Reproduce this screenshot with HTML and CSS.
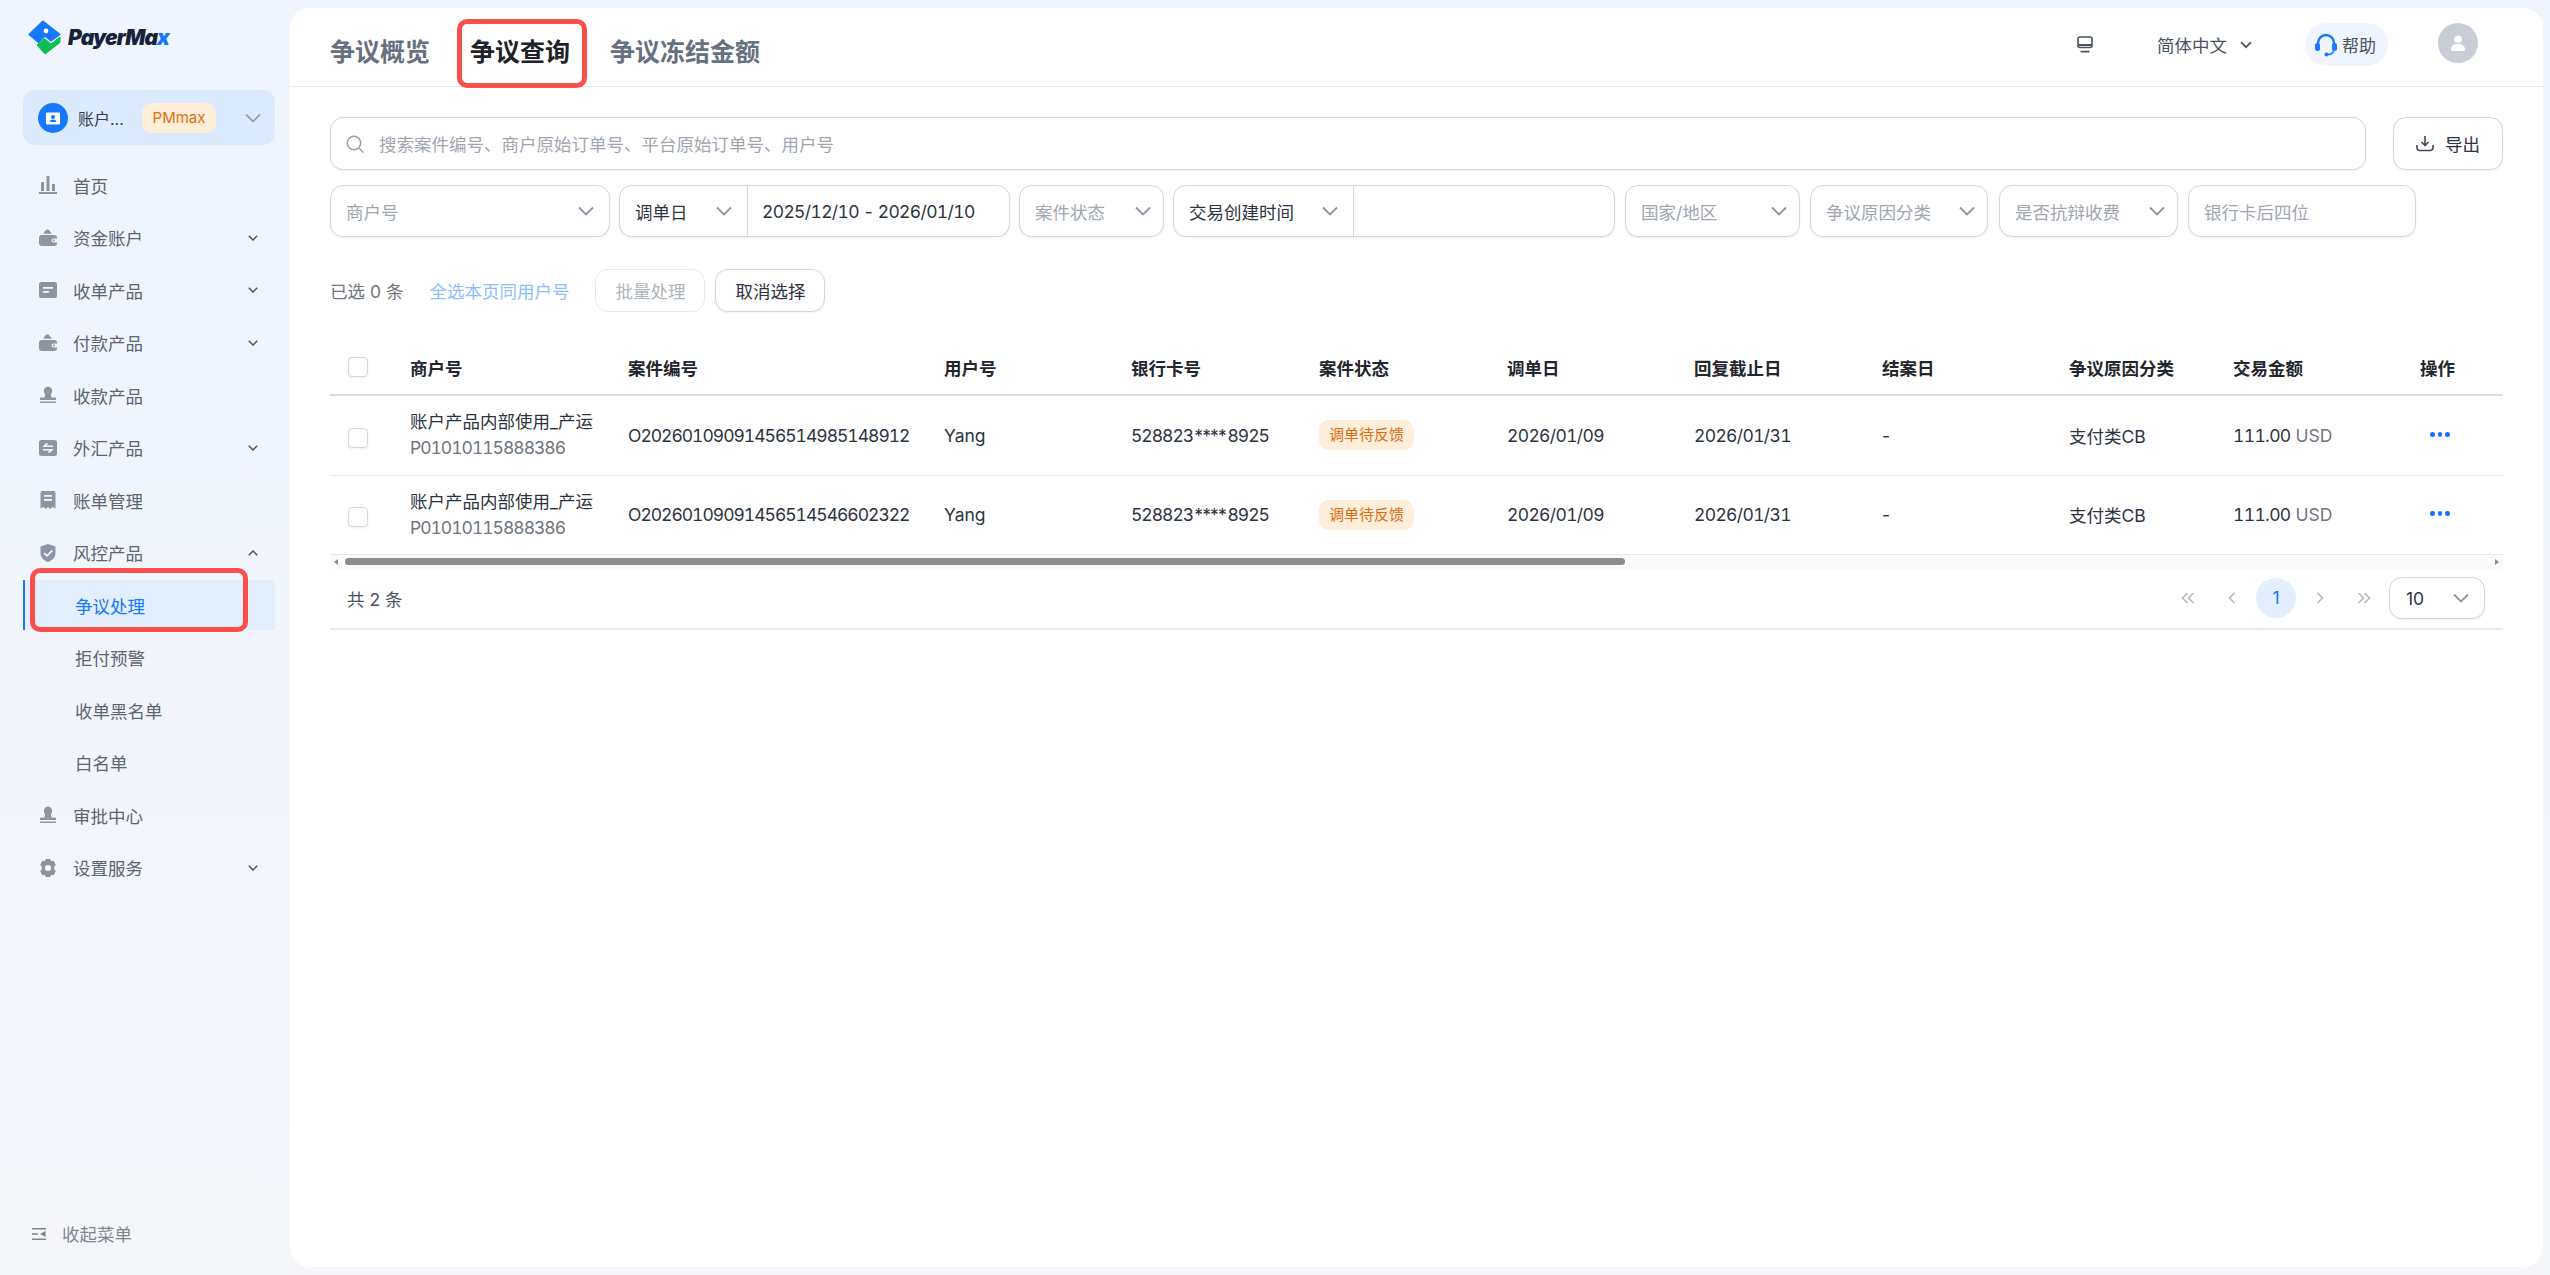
FILE: index.html
```html
<!DOCTYPE html>
<html lang="zh-CN">
<head>
    <meta charset="UTF-8">
    <title>争议查询</title>
    <link rel="stylesheet" href="styles.css">
</head>
<body>
    <aside class="sidebar">
        <div class="logo">
            <svg class="logo-mark" viewBox="0 0 33 35">
                <path d="M15 1.5 31.5 14.5 23 20.5 17 15.5 10.5 22 1.5 14.5Z" fill="#1677ff" stroke="#1677ff" stroke-width="2" stroke-linejoin="round"/>
                <circle cx="18" cy="11" r="2.4" fill="#fff"/>
                <path d="M9 25 16.5 18.5 23 24 32 17V22.5L17 34Z" fill="#0cbf52" stroke="#0cbf52" stroke-width="1" stroke-linejoin="round"/>
            </svg>
            <span class="logo-text">Payer<span class="logo-ma">Ma</span><span class="logo-x">x</span></span>
        </div>

        <div class="account">
            <span class="account-icon">
                <svg viewBox="0 0 16 16" width="16" height="16"><path d="M2 2.5h12a1 1 0 0 1 1 1v10a1 1 0 0 1-1 1H2a1 1 0 0 1-1-1v-10a1 1 0 0 1 1-1Z" fill="#fff"/><circle cx="8" cy="7" r="2" fill="#1677ff"/><path d="M4.5 12c.5-2 2-2.6 3.500-2.600s3 .6 3.500 2.600Z" fill="#1677ff"/></svg>
            </span>
            <span class="account-name">账户...</span>
            <span class="account-badge">PMmax</span>
            <svg class="account-arrow" viewBox="0 0 16 10" width="16" height="10"><path d="M1 1.500 8 8.500 15 1.500" fill="none" stroke="#9aa1ad" stroke-width="1.800"/></svg>
        </div>

        <nav class="nav">
            <a class="nav-item">
                <svg class="nav-icon" viewBox="0 0 18 18"><path d="M7.500 0h3v15h-3ZM2 6h3v9H2ZM13 8h3v7h-3ZM0 16h18v2H0Z"/></svg>
                <span>首页</span>
            </a>
            <a class="nav-item">
                <svg class="nav-icon" viewBox="0 0 18 18"><path fill-rule="evenodd" d="M4.500 4.800C5 2.500 7 .5 8.500.5c1 0 1.500.5 2 1.200L13 4.800ZM3 6h12a3 3 0 0 1 3 3v.5h-3.500a2 2 0 0 0 0 4H18v.5a3 3 0 0 1-3 3H3a3 3 0 0 1-3-3V9a3 3 0 0 1 3-3Z"/><circle cx="14.800" cy="11.500" r="1"/></svg>
                <span>资金账户</span>
                <svg class="nav-arrow" viewBox="0 0 10 6"><path d="M.8.800 5 5 9.200.800"/></svg>
            </a>
            <a class="nav-item">
                <svg class="nav-icon" viewBox="0 0 18 18"><path fill-rule="evenodd" d="M2.500 1h13A2.500 2.500 0 0 1 18 3.500v11a2.500 2.500 0 0 1-2.500 2.500h-13A2.500 2.500 0 0 1 0 14.500v-11A2.500 2.500 0 0 1 2.500 1ZM4 6v1.800h10V6ZM4 10v1.800h6V10Z"/></svg>
                <span>收单产品</span>
                <svg class="nav-arrow" viewBox="0 0 10 6"><path d="M.8.800 5 5 9.200.800"/></svg>
            </a>
            <a class="nav-item">
                <svg class="nav-icon" viewBox="0 0 18 18"><path fill-rule="evenodd" d="M4.500 4.800C5 2.500 7 .5 8.500.5c1 0 1.500.5 2 1.200L13 4.800ZM3 6h12a3 3 0 0 1 3 3v.5h-3.500a2 2 0 0 0 0 4H18v.5a3 3 0 0 1-3 3H3a3 3 0 0 1-3-3V9a3 3 0 0 1 3-3Z"/><circle cx="14.800" cy="11.500" r="1"/></svg>
                <span>付款产品</span>
                <svg class="nav-arrow" viewBox="0 0 10 6"><path d="M.8.800 5 5 9.200.800"/></svg>
            </a>
            <a class="nav-item">
                <svg class="nav-icon" viewBox="0 0 18 18"><circle cx="9" cy="5" r="4.200"/><path d="M6.500 8h5l1 3.500h3.500a1 1 0 0 1 1 1V14H1v-1.500a1 1 0 0 1 1-1h3.500ZM1 15.500h16V17H1Z"/></svg>
                <span>收款产品</span>
            </a>
            <a class="nav-item">
                <svg class="nav-icon" viewBox="0 0 18 18"><path fill-rule="evenodd" d="M2.500 1h13A2.500 2.500 0 0 1 18 3.500v11a2.500 2.500 0 0 1-2.500 2.500h-13A2.500 2.500 0 0 1 0 14.500v-11A2.500 2.500 0 0 1 2.500 1ZM8 3.800 4 6.900v1h10V6.500H7.500L9 5ZM10 14.200l4-3.100v-1H4v1.400h6.500L9 13Z"/></svg>
                <span>外汇产品</span>
                <svg class="nav-arrow" viewBox="0 0 10 6"><path d="M.8.800 5 5 9.200.800"/></svg>
            </a>
            <a class="nav-item">
                <svg class="nav-icon" viewBox="0 0 18 18"><path fill-rule="evenodd" d="M3.500 0h11A2 2 0 0 1 16.500 2v15.500L13.500 16 11 18 9 16 7 18 4.500 16 1.500 17.500V2a2 2 0 0 1 2-2ZM5 4v1.800h8V4ZM5 8v1.800h8V8Z"/></svg>
                <span>账单管理</span>
            </a>
            <a class="nav-item">
                <svg class="nav-icon" viewBox="0 0 18 18"><path fill-rule="evenodd" d="M9 0 16.500 2.500V9c0 4.500-3.500 7.800-7.500 9-4-1.200-7.500-4.500-7.500-9V2.500ZM5.500 8.500 4.400 9.700 8 13l6-6-1.200-1.200L8 10.600Z"/></svg>
                <span>风控产品</span>
                <svg class="nav-arrow" viewBox="0 0 10 6"><path d="M.8 5.200 5 1l4.200 4.200"/></svg>
            </a>
            <a class="nav-sub nav-sub-active">争议处理</a>
            <a class="nav-sub">拒付预警</a>
            <a class="nav-sub">收单黑名单</a>
            <a class="nav-sub">白名单</a>
            <a class="nav-item">
                <svg class="nav-icon" viewBox="0 0 18 18"><circle cx="9" cy="5" r="4.200"/><path d="M6.500 8h5l1 3.500h3.500a1 1 0 0 1 1 1V14H1v-1.500a1 1 0 0 1 1-1h3.500ZM1 15.500h16V17H1Z"/></svg>
                <span>审批中心</span>
            </a>
            <a class="nav-item">
                <svg class="nav-icon" viewBox="0 0 18 18"><path fill-rule="evenodd" d="M6.500 0h5l.6 2.300 2.300-.7 2.500 4.300-1.700 1.700v2.800l1.700 1.700-2.500 4.300-2.300-.7-.6 2.300h-5l-.6-2.300-2.300.7L1.100 12.100l1.700-1.700V7.600L1.100 5.900l2.500-4.300 2.300.7ZM9 6a3 3 0 1 0 0 6 3 3 0 0 0 0-6Z"/></svg>
                <span>设置服务</span>
                <svg class="nav-arrow" viewBox="0 0 10 6"><path d="M.8.800 5 5 9.200.800"/></svg>
            </a>
        </nav>

        <div class="collapse">
            <svg viewBox="0 0 14 12" width="14" height="12"><path d="M0 0h14v1.600H0ZM0 5.200h6v1.600H0ZM0 10.400h14V12H0ZM13.500 3v6L8 6Z" fill="#7d8590"/></svg>
            <span>收起菜单</span>
        </div>
    </aside>

    <main class="panel">
        <header class="topbar">
            <div class="tabs">
                <a class="tab">争议概览</a>
                <a class="tab tab-active">争议查询</a>
                <a class="tab">争议冻结金额</a>
            </div>
            <div class="top-actions">
                <svg class="top-monitor" viewBox="0 0 16 17" width="16" height="17"><rect x="1" y="1" width="14" height="10.500" rx="2" fill="none" stroke="#4b5361" stroke-width="1.600"/><path d="M1 8h14v2H1ZM3.500 14.800h9v1.600h-9Z" fill="#4b5361"/></svg>
                <span class="top-lang">简体中文</span>
                <svg class="top-lang-arrow" viewBox="0 0 12 8" width="12" height="8"><path d="M1 1.200 6 6.200l5-5" fill="none" stroke="#4b5361" stroke-width="1.800"/></svg>
                <span class="help">
                    <svg viewBox="0 0 22 24" width="22" height="24"><path d="M3 12V10a8 8 0 0 1 16 0v2" fill="none" stroke="#1677ff" stroke-width="2.400"/><rect x="0" y="10" width="5" height="8" rx="2.500" fill="#1677ff"/><rect x="17" y="10" width="5" height="8" rx="2.500" fill="#1677ff"/><path d="M18.500 18c-.5 2.500-3 3.500-6 3.500" fill="none" stroke="#1677ff" stroke-width="1.600"/><circle cx="11.500" cy="21.500" r="2" fill="#1677ff"/></svg>
                    <span>帮助</span>
                </span>
                <span class="avatar">
                    <svg viewBox="0 0 16 16" width="16" height="16"><circle cx="8" cy="4.200" r="3.800" fill="#fff"/><path d="M1 15c0-4 2.500-6 7-6s7 2 7 6c0 .6-.4 1-1 1H2c-.6 0-1-.4-1-1Z" fill="#fff"/></svg>
                </span>
            </div>
        </header>

        <section class="content">
            <div class="search-row">
                <div class="box search">
                    <svg viewBox="0 0 18 18" width="18" height="18"><circle cx="8" cy="8" r="6.700" fill="none" stroke="#99a0ab" stroke-width="1.500"/><path d="m13 13 4.500 4.500" stroke="#99a0ab" stroke-width="1.500"/></svg>
                    <span class="ph">搜索案件编号、商户原始订单号、平台原始订单号、用户号</span>
                </div>
                <button class="box export">
                    <svg viewBox="0 0 18 16" width="18" height="16"><path d="M9 0v9M5.500 6 9 9.500 12.500 6" fill="none" stroke="#414a58" stroke-width="1.600"/><path d="M1 9v2.500a3 3 0 0 0 3 3h10a3 3 0 0 0 3-3V9" fill="none" stroke="#414a58" stroke-width="1.600"/></svg>
                    <span>导出</span>
                </button>
            </div>

            <div class="filters">
                <div class="box field f-merchant"><span class="ph">商户号</span><svg class="caret" viewBox="0 0 16 10"><path d="M1 1.500 8 8.500l7-7"/></svg></div>
                <div class="box combo f-date">
                    <div class="combo-left cl-date"><span>调单日</span><svg class="caret" viewBox="0 0 16 10"><path d="M1 1.500 8 8.500l7-7"/></svg></div>
                    <span class="combo-val date">2025/12/10 - 2026/01/10</span>
                </div>
                <div class="box field f-status"><span class="ph">案件状态</span><svg class="caret" viewBox="0 0 16 10"><path d="M1 1.500 8 8.500l7-7"/></svg></div>
                <div class="box combo f-created">
                    <div class="combo-left cl-created"><span>交易创建时间</span><svg class="caret" viewBox="0 0 16 10"><path d="M1 1.500 8 8.500l7-7"/></svg></div>
                </div>
                <div class="box field f-country"><span class="ph">国家/地区</span><svg class="caret" viewBox="0 0 16 10"><path d="M1 1.500 8 8.500l7-7"/></svg></div>
                <div class="box field f-reason"><span class="ph">争议原因分类</span><svg class="caret" viewBox="0 0 16 10"><path d="M1 1.500 8 8.500l7-7"/></svg></div>
                <div class="box field f-fee"><span class="ph">是否抗辩收费</span><svg class="caret" viewBox="0 0 16 10"><path d="M1 1.500 8 8.500l7-7"/></svg></div>
                <div class="box field f-card"><span class="ph">银行卡后四位</span></div>
            </div>

            <div class="toolbar">
                <span class="selected">已选 0 条</span>
                <a class="select-all">全选本页同用户号</a>
                <button class="box tool-btn tool-disabled">批量处理</button>
                <button class="box tool-btn">取消选择</button>
            </div>

            <table class="grid">
                <colgroup>
                    <col class="c1"><col class="c2"><col class="c3"><col class="c4"><col class="c5"><col class="c6">
                    <col class="c7"><col class="c8"><col class="c9"><col class="c10"><col class="c11"><col class="c12">
                </colgroup>
                <thead>
                    <tr>
                        <th><span class="check"></span></th>
                        <th>商户号</th><th>案件编号</th><th>用户号</th><th>银行卡号</th><th>案件状态</th>
                        <th>调单日</th><th>回复截止日</th><th>结案日</th><th>争议原因分类</th><th>交易金额</th><th>操作</th>
                    </tr>
                </thead>
                <tbody>
                    <tr>
                        <td><span class="check"></span></td>
                        <td><div class="m-name">账户产品内部使用_产运</div><div class="m-id num">P01010115888386</div></td>
                        <td class="num">O20260109091456514985148912</td>
                        <td>Yang</td>
                        <td class="num">528823<span class="stars">****</span>8925</td>
                        <td><span class="tag">调单待反馈</span></td>
                        <td class="date">2026/01/09</td>
                        <td class="date">2026/01/31</td>
                        <td>-</td>
                        <td>支付类CB</td>
                        <td><span class="date">111.00</span> <span class="cur">USD</span></td>
                        <td><span class="more"><i></i><i></i><i></i></span></td>
                    </tr>
                    <tr>
                        <td><span class="check"></span></td>
                        <td><div class="m-name">账户产品内部使用_产运</div><div class="m-id num">P01010115888386</div></td>
                        <td class="num">O20260109091456514546602322</td>
                        <td>Yang</td>
                        <td class="num">528823<span class="stars">****</span>8925</td>
                        <td><span class="tag">调单待反馈</span></td>
                        <td class="date">2026/01/09</td>
                        <td class="date">2026/01/31</td>
                        <td>-</td>
                        <td>支付类CB</td>
                        <td><span class="date">111.00</span> <span class="cur">USD</span></td>
                        <td><span class="more"><i></i><i></i><i></i></span></td>
                    </tr>
                </tbody>
            </table>

            <div class="scrollbar">
                <span class="sb-left"></span>
                <span class="sb-thumb"></span>
                <span class="sb-right"></span>
            </div>

            <div class="pager-row">
                <span class="total">共 2 条</span>
                <div class="pager">
                    <svg class="pg" viewBox="0 0 14 12"><path d="M6.500 1 1.500 6l5 5M12.500 1l-5 5 5 5"/></svg>
                    <svg class="pg" viewBox="0 0 14 12"><path d="M9.500 1 4.500 6l5 5"/></svg>
                    <span class="pg-num">1</span>
                    <svg class="pg" viewBox="0 0 14 12"><path d="M4.500 1l5 5-5 5"/></svg>
                    <svg class="pg" viewBox="0 0 14 12"><path d="M1.500 1l5 5-5 5M7.500 1l5 5-5 5"/></svg>
                    <div class="box page-size"><span>10</span><svg class="caret" viewBox="0 0 16 10"><path d="M1 1.500 8 8.500l7-7"/></svg></div>
                </div>
            </div>
        </section>
    </main>

    <div class="mark mark-nav"></div>
    <div class="mark mark-tab"></div>
</body>
</html>
```

FILE: styles.css
```css
* {
    box-sizing: border-box;
}

html, body {
    height: 100%;
}

body {
    margin: 0;
    height: 1275px;
    display: flex;
    overflow: hidden;
    font-family: "Inter", "Noto Sans CJK SC", sans-serif;
    font-size: 17.5px;
    color: #2c3442;
    background: linear-gradient(180deg, #eff4fe, #f4f6fa);
}

.num, .date {
    font-variant-numeric: tabular-nums;
}

.num {
    letter-spacing: -1px;
}

.date {
    letter-spacing: -0.65px;
}

.stars {
    letter-spacing: -3.5px;
    margin-right: 3px;
}

/* sidebar */
.sidebar {
    width: 290px;
    flex: none;
    display: flex;
    flex-direction: column;
    position: relative;
}

.logo {
    height: 90px;
    padding: 20px 0 0 28px;
    display: flex;
    align-items: flex-start;
    gap: 7px;
}

.logo-mark {
    width: 33px;
    height: 35px;
}

.logo-text {
    font-family: "Inter", sans-serif;
    font-weight: 900;
    font-style: italic;
    font-size: 21px;
    line-height: 36px;
    letter-spacing: -0.9px;
    color: #14233a;
}

.logo-x {
    color: #1677ff;
}

.account {
    margin-left: 23px;
    width: 252px;
    height: 55px;
    flex: none;
    padding-left: 15px;
    border-radius: 12px;
    background: #dceafe;
    display: flex;
    align-items: center;
}

.account-icon {
    width: 30px;
    height: 30px;
    border-radius: 50%;
    background: #1677ff;
    display: flex;
    align-items: center;
    justify-content: center;
}

.account-name {
    margin-left: 10px;
    width: 64px;
    font-size: 16px;
    color: #343c49;
}

.account-badge {
    width: 74px;
    height: 30px;
    border-radius: 10px;
    background: #ffeed8;
    color: #e0700f;
    font-size: 15px;
    line-height: 30px;
    text-align: center;
}

.account-arrow {
    margin-left: 29px;
}

.nav {
    margin: 14px 0 0 23px;
    width: 252px;
    display: flex;
    flex-direction: column;
}

.nav-item, .nav-sub {
    height: 52.5px;
    display: flex;
    align-items: center;
    color: #5d6573;
    flex: none;
}

.nav-item {
    padding: 0 17px 0 16px;
}

.nav-icon {
    width: 18px;
    height: 18px;
    margin-right: 16px;
    fill: #8d95a2;
}

.nav-arrow {
    width: 10px;
    height: 6px;
    margin-left: auto;
    fill: none;
    stroke: #4b5361;
    stroke-width: 1.500;
}

.nav-sub {
    padding-left: 52px;
}

.nav-sub-active {
    height: 50px;
    margin: 1.25px 0;
    color: #1677ff;
    background: #e3effd;
    border-left: 2px solid #1677ff;
    padding-left: 50px;
}

.collapse {
    margin-top: auto;
    padding: 0 0 29px 32px;
    display: flex;
    align-items: center;
    gap: 16px;
    color: #7e858f;
}

/* main panel */
.panel {
    flex: 1;
    margin: 8px 7px 8px 0;
    background: #fff;
    border-radius: 20px;
    display: flex;
    flex-direction: column;
}

.topbar {
    height: 79px;
    flex: none;
    border-bottom: 1px solid #e8eaee;
    padding: 0 65px 0 40px;
    display: flex;
    align-items: center;
    justify-content: space-between;
}

.tabs {
    display: flex;
    gap: 40px;
    padding-top: 6px;
}

.tab {
    font-size: 25px;
    font-weight: 700;
    color: #667080;
}

.tab-active {
    color: #1f2228;
}

.top-actions {
    display: flex;
    align-items: center;
    height: 43px;
    margin-bottom: 5px;
}

.top-lang {
    margin-left: 64px;
    color: #4b5361;
}

.top-lang-arrow {
    margin-left: 13px;
}

.help {
    margin-left: 53px;
    width: 83px;
    height: 43px;
    border-radius: 22px;
    background: #eff4fe;
    padding-left: 10px;
    display: flex;
    align-items: center;
    gap: 5px;
    color: #4b5361;
    font-size: 17px;
}

.avatar {
    margin-left: 50px;
    width: 40px;
    height: 40px;
    border-radius: 50%;
    background: #c9ced6;
    display: flex;
    align-items: center;
    justify-content: center;
    margin-top: -3px;
}

/* filters */
.content {
    padding: 30px 40px 0;
}

.box {
    border: 1px solid #d3d6de;
    border-radius: 13px;
    background: #fff;
    box-shadow: 0 1px 2px rgba(30, 40, 70, 0.08);
    font: inherit;
    color: inherit;
}

.ph {
    color: #a0a6b0;
}

.search-row {
    display: flex;
    gap: 27px;
}

.search {
    width: 2036px;
    height: 53px;
    padding-left: 15px;
    display: flex;
    align-items: center;
    gap: 15px;
}

.export {
    width: 110px;
    height: 53px;
    display: flex;
    align-items: center;
    justify-content: center;
    gap: 11px;
}

.filters {
    margin-top: 15px;
    display: flex;
    gap: 9px;
}

.field, .combo {
    height: 52px;
    display: flex;
    align-items: center;
    flex: none;
}

.field {
    padding: 0 12px 0 15px;
    justify-content: space-between;
}

.caret {
    width: 16px;
    height: 10px;
    flex: none;
    fill: none;
    stroke: #8d95a2;
    stroke-width: 1.800;
}

.f-merchant { width: 280px; padding-right: 15px; }
.f-date { width: 391px; }
.f-status { width: 145px; }
.f-created { width: 442px; }
.f-country { width: 175px; margin-left: 1px; }
.f-reason { width: 178px; margin-left: 1px; }
.f-fee { width: 179px; margin-left: 2px; }
.f-card { width: 228px; margin-left: 1px; }

.combo-left {
    height: 100%;
    padding: 0 15px 0 15px;
    border-right: 1px solid #d3d6de;
    display: flex;
    align-items: center;
    justify-content: space-between;
    flex: none;
}

.cl-date { width: 128px; }
.cl-created { width: 180px; }

.combo-val {
    margin-left: 14px;
    white-space: nowrap;
}

/* toolbar */
.toolbar {
    margin-top: 32px;
    height: 43px;
    display: flex;
    align-items: center;
}

.selected {
    color: #6f7680;
}

.select-all {
    margin-left: 26px;
    color: #8dbdfb;
}

.tool-btn {
    margin-left: 10px;
    width: 110px;
    height: 43px;
    padding: 0;
}

.select-all + .tool-btn {
    margin-left: 26px;
}

.tool-disabled {
    color: #b0b5bc;
    border-color: #e8eaee;
    box-shadow: none;
}

/* table */
.grid {
    margin-top: 30px;
    width: 2173px;
    border-collapse: collapse;
    table-layout: fixed;
}

.c1 { width: 80px; }
.c2 { width: 218px; }
.c3 { width: 316px; }
.c4 { width: 187px; }
.c5 { width: 188px; }
.c6 { width: 188px; }
.c7 { width: 187px; }
.c8 { width: 188px; }
.c9 { width: 187px; }
.c10 { width: 164px; }
.c11 { width: 187px; }
.c12 { width: 83px; }

.grid th {
    height: 53px;
    padding: 0 0 2px;
    text-align: left;
    font-weight: 700;
    color: #22262d;
    border-bottom: 2px solid #dcdee2;
}

.grid td {
    height: 80px;
    padding: 0;
    border-bottom: 1px solid #e6e8eb;
    white-space: nowrap;
}

.grid tbody tr:last-child td {
    height: 79px;
}

.check {
    display: block;
    margin-left: 18px;
    width: 20px;
    height: 20px;
    border: 1px solid #d3d6de;
    border-radius: 4px;
    box-shadow: 0 1px 2px rgba(30, 40, 70, 0.08);
}

.grid td .check {
    margin-top: 5px;
}

.m-name {
    line-height: 26px;
}

.m-id {
    line-height: 26px;
    color: #6f7680;
}

.tag {
    display: inline-block;
    height: 30px;
    padding: 0 10px;
    border-radius: 10px;
    background: #ffeed9;
    color: #dd6b10;
    font-size: 15px;
    line-height: 30px;
}

.cur {
    color: #6f7680;
}

.more {
    margin-left: 10px;
    display: flex;
    gap: 3px;
    margin-top: -2px;
}

.more i {
    width: 4.5px;
    height: 4.5px;
    border-radius: 50%;
    background: #1e6fff;
}

.scrollbar {
    height: 14px;
    background: #fafafa;
    display: flex;
    align-items: center;
    position: relative;
}

.sb-thumb {
    margin-left: 15px;
    width: 1280px;
    height: 7px;
    border-radius: 4px;
    background: #8c8c8c;
}

.sb-left, .sb-right {
    position: absolute;
    top: 4px;
    width: 0;
    height: 0;
    border-top: 3px solid transparent;
    border-bottom: 3px solid transparent;
}

.sb-left {
    left: 4px;
    border-right: 4px solid #8c8c8c;
}

.sb-right {
    right: 4px;
    border-left: 4px solid #8c8c8c;
}

.pager-row {
    height: 61px;
    padding: 0 18px 0 17px;
    border-bottom: 2px solid #e6e8eb;
    display: flex;
    align-items: center;
    justify-content: space-between;
}

.total {
    color: #4b5361;
}

.pager {
    display: flex;
    align-items: center;
}

.pg {
    width: 14px;
    height: 12px;
    margin: 0 15px;
    fill: none;
    stroke: #b3b8c1;
    stroke-width: 1.600;
}

.pg-num {
    width: 40px;
    height: 40px;
    margin: 0 2px;
    border-radius: 50%;
    background: #e3effe;
    color: #1677ff;
    line-height: 40px;
    text-align: center;
}

.page-size {
    margin-left: 3px;
    width: 96px;
    height: 42px;
    padding: 0 15px 0 16px;
    display: flex;
    align-items: center;
    justify-content: space-between;
}

/* red annotation boxes */
.mark {
    position: absolute;
    border: 5px solid #f9504b;
    border-radius: 10px;
}

.mark-nav {
    left: 30px;
    top: 568px;
    width: 218px;
    height: 64px;
}

.mark-tab {
    left: 457px;
    top: 19px;
    width: 130px;
    height: 69px;
}
```
